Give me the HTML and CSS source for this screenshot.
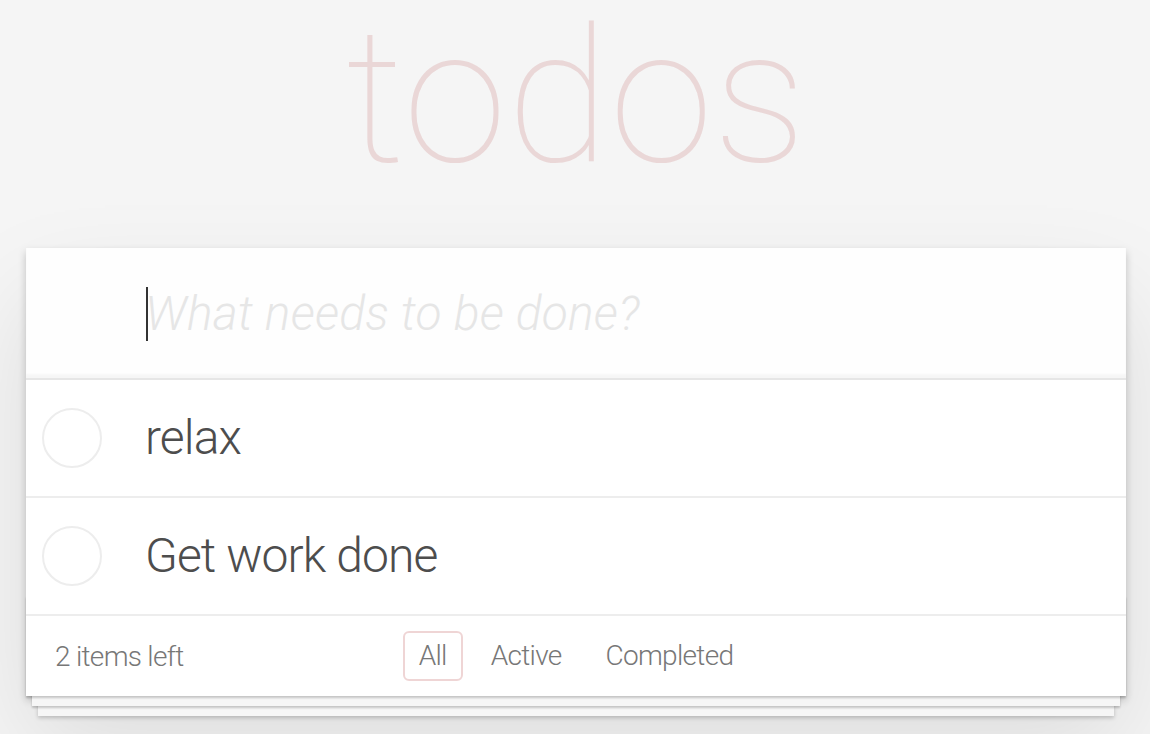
FILE: index.html
```html
<!DOCTYPE html>
<html lang="en">
<head>
<meta charset="utf-8">
<title>todos</title>
<link rel="stylesheet" href="styles.css">
</head>
<body>
<header class="header">
  <h1 class="title">todos</h1>
</header>
<section class="todoapp">
  <div class="new-todo-wrap">
    <input class="new-todo" placeholder="What needs to be done?">
  </div>
  <ul class="todo-list">
    <li class="todo">
      <span class="toggle"></span>
      <label class="todo-label">relax</label>
    </li>
    <li class="todo">
      <span class="toggle"></span>
      <label class="todo-label">Get work done</label>
    </li>
  </ul>
  <footer class="footer">
    <span class="todo-count">2 items left</span>
    <ul class="filters">
      <li><a class="filter selected">All</a></li>
      <li><a class="filter">Active</a></li>
      <li><a class="filter">Completed</a></li>
    </ul>
  </footer>
</section>
</body>
</html>
```
FILE: styles.css
```css
html, body {
  margin: 0;
  padding: 0;
}
body {
  padding-left: 2px;
  background: #f5f5f5;
  font-family: Roboto, "Helvetica Neue", "Liberation Sans", sans-serif;
  font-weight: 300;
  color: #4d4d4d;
  -webkit-font-smoothing: antialiased;
}
.header {
  height: 248px;
}
.title {
  margin: 0;
  font-size: 188px;
  line-height: 194px;
  font-weight: 100;
  text-align: center;
  color: rgba(175, 47, 47, 0.15);
}
.todoapp {
  width: 1100px;
  margin: 0 auto 80px;
  background: #fff;
  position: relative;
  box-shadow: 0 4px 8px 0 rgba(0, 0, 0, 0.2), 0 50px 100px 0 rgba(0, 0, 0, 0.1);
}
.new-todo-wrap {
  position: relative;
}
.new-todo-wrap::before {
  content: "";
  position: absolute;
  left: 120px;
  top: 39px;
  width: 2px;
  height: 54px;
  background: #333;
}
.new-todo {
  display: block;
  width: 100%;
  height: 130px;
  box-sizing: border-box;
  margin: 0;
  padding: 0 32px 0 119px;
  border: none;
  outline: none;
  background: rgba(0, 0, 0, 0.003);
  box-shadow: inset 0 -4px 2px rgba(0, 0, 0, 0.03);
  font-family: inherit;
  font-size: 48px;
  font-weight: 300;
  letter-spacing: 0.2px;
  color: #4d4d4d;
  caret-color: transparent;
}
.new-todo::placeholder {
  font-style: italic;
  font-weight: 300;
  color: #e6e6e6;
}
.todo-list {
  margin: 0;
  padding: 0;
  list-style: none;
  border-top: 2px solid #e6e6e6;
}
.todo {
  display: flex;
  align-items: center;
  height: 118px;
  box-sizing: border-box;
  border-bottom: 2px solid #ededed;
  font-size: 48px;
}
.toggle {
  width: 60px;
  height: 60px;
  box-sizing: border-box;
  margin-left: 16px;
  border: 2px solid #ededed;
  border-radius: 50%;
  flex: none;
}
.todo-label {
  margin-left: 43px;
  line-height: 1.2;
  letter-spacing: -0.9px;
  color: #4d4d4d;
}
.footer {
  position: relative;
  display: flex;
  align-items: center;
  height: 80px;
  padding: 0 30px 0 29px;
  color: #777;
  font-size: 28px;
  letter-spacing: -0.7px;
}
.footer::before {
  content: "";
  position: absolute;
  left: 0;
  right: 0;
  bottom: 0;
  height: 100px;
  overflow: hidden;
  box-shadow: 0 2px 2px rgba(0, 0, 0, 0.2),
    0 16px 0 -6px #f6f6f6,
    0 18px 2px -6px rgba(0, 0, 0, 0.2),
    0 32px 0 -12px #f6f6f6,
    0 34px 4px -12px rgba(0, 0, 0, 0.2);
}
.todo-count {
  position: relative;
  z-index: 1;
}
.filters {
  position: absolute;
  left: 0;
  right: 0;
  top: 0;
  bottom: 0;
  z-index: 1;
  margin: 0;
  padding: 0;
  list-style: none;
  display: flex;
  justify-content: center;
  align-items: center;
}
.filter {
  display: block;
  margin: 0 6px;
  padding: 6px 14px;
  border: 2px solid transparent;
  border-radius: 6px;
  color: inherit;
  line-height: 34px;
}
.filter.selected {
  border-color: rgba(175, 47, 47, 0.2);
}
```
